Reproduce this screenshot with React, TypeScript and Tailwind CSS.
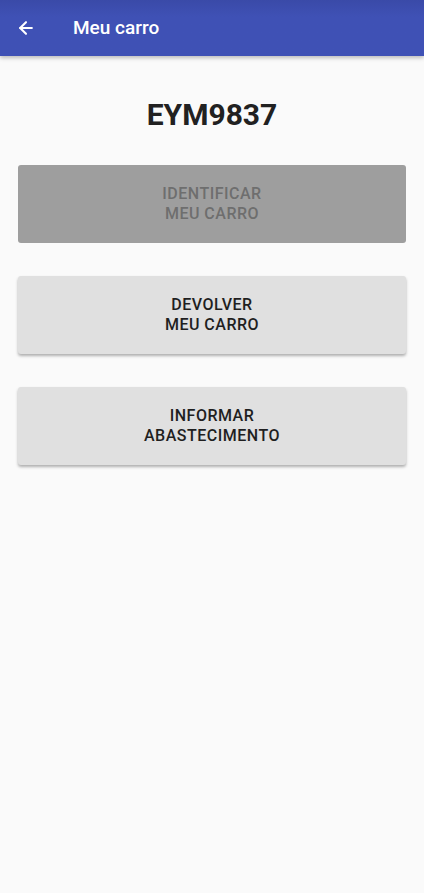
import { ArrowLeft } from 'lucide-react';

const buttons = [
  { label: ['IDENTIFICAR', 'MEU CARRO'], disabled: true },
  { label: ['DEVOLVER', 'MEU CARRO'], disabled: false },
  { label: ['INFORMAR', 'ABASTECIMENTO'], disabled: false },
];

export default function App() {
  return (
    <div className="min-h-[893px] bg-[#fafafa] font-['Roboto',sans-serif]">
      <header className="h-14 bg-gradient-to-b from-[#3a4aa8] to-[#3f51b5] to-[30%] flex items-center px-4 shadow-[0_2px_4px_rgba(0,0,0,0.25)]">
        <ArrowLeft className="w-5 h-5 text-white" strokeWidth={2.5} />
        <h1 className="ml-[37px] text-white text-[19px] font-medium">Meu carro</h1>
      </header>

      <main className="px-[18px]">
        <h2 className="pt-[40px] text-center text-[30px] leading-[38px] font-bold text-[#212121]">EYM9837</h2>

        <div className="mt-[31px] flex flex-col gap-[33px]">
          {buttons.map((b) => (
            <button
              key={b.label[0]}
              disabled={b.disabled}
              className={`h-[78px] w-full rounded-[3px] flex flex-col items-center justify-center text-[16px] leading-[20px] font-medium tracking-[0.5px] ${
                b.disabled
                  ? 'bg-[#9e9e9e] text-[#6e6e6e]'
                  : 'bg-[#e0e0e0] text-[#1f1f1f] shadow-[0_2px_3px_rgba(0,0,0,0.3)]'
              }`}
            >
              <span>{b.label[0]}</span>
              <span>{b.label[1]}</span>
            </button>
          ))}
        </div>
      </main>
    </div>
  );
}
